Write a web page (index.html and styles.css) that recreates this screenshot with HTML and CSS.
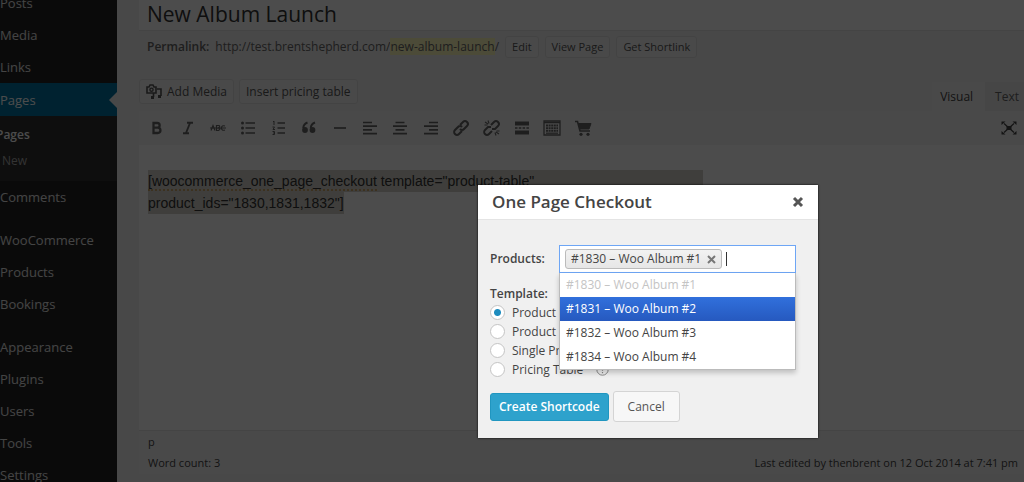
FILE: index.html
```html
<!DOCTYPE html>
<html lang="en">
<head>
<meta charset="utf-8">
<title>New Album Launch</title>
<link rel="stylesheet" href="styles.css">
</head>
<body>
<div class="app">
  <nav class="menu" aria-label="Admin menu">
    <a class="item" href="#">Posts</a>
    <a class="item" href="#">Media</a>
    <a class="item" href="#">Links</a>
    <a class="item current" href="#">Pages</a>
    <div class="submenu">
      <a class="subitem selected" href="#">Pages</a>
      <a class="subitem" href="#">New</a>
    </div>
    <a class="item" href="#">Comments</a>
    <a class="item group" href="#">WooCommerce</a>
    <a class="item" href="#">Products</a>
    <a class="item" href="#">Bookings</a>
    <a class="item group" href="#">Appearance</a>
    <a class="item" href="#">Plugins</a>
    <a class="item" href="#">Users</a>
    <a class="item" href="#">Tools</a>
    <a class="item" href="#">Settings</a>
  </nav>

  <main class="main">
    <input class="title" type="text" aria-label="Title" value="New Album Launch">
    <div class="permalink">
      <strong>Permalink:</strong>
      <span class="url">http://test.brentshepherd.com/<mark>new-album-launch</mark>/</span>
      <button class="small">Edit</button>
      <button class="small">View Page</button>
      <button class="small">Get Shortlink</button>
    </div>

    <div class="tools">
      <button class="media">
        <svg width="16" height="16" viewBox="0 0 16 16" fill="none" stroke="currentColor"><path d="M1 3h2l1-2h3l1 2h2v6H1z" stroke-width="1.6"/><circle cx="5.5" cy="5.7" r="1.6" stroke-width="1.4"/><path d="M11 5h4v7M7.500 9v4" stroke-width="1.600"/><path d="M5 12h3v3H5zM12 11h3v3h-3z" fill="currentColor" stroke="none"/></svg>
        Add Media
      </button>
      <button class="media">Insert pricing table</button>
      <div class="tabs">
        <button class="tab active">Visual</button>
        <button class="tab">Text</button>
      </div>
    </div>

    <section class="editor">
      <div class="toolbar">
        <div class="icons">
          <button aria-label="Bold"><svg viewBox="0 0 18 18"><path d="M5.500 4h3.800a2.300 2.300 0 0 1 0 4.700H5.500zM5.500 8.700h4.300a2.600 2.600 0 0 1 0 5.300H5.500z" stroke-width="2.300"/></svg></button>
          <button aria-label="Italic"><svg viewBox="0 0 18 18"><path d="M8 3.700h6M4 14.300h6M11 4L7 14" stroke-width="1.900"/></svg></button>
          <button aria-label="Strikethrough"><svg viewBox="0 0 18 18"><path d="M1 9h16" stroke-width="1"/><path d="M2 11.500L4 6.500l2 5M7.500 6.500v5h2q3-2.500 0-2.500q2.500-2.500 0-2.500zM16 7q-3.500-1-3.500 2t3.500 2" stroke-width="1.200"/></svg></button>
          <button aria-label="Bulleted list"><svg viewBox="0 0 18 18"><path d="M6.500 4H16M6.500 9H16M6.500 14H16" stroke-width="1.400"/><g fill="currentColor" stroke="none"><circle cx="3.500" cy="4" r="1.500"/><circle cx="3.500" cy="9" r="1.500"/><circle cx="3.500" cy="14" r="1.500"/></g></svg></button>
          <button aria-label="Numbered list"><svg viewBox="0 0 18 18"><path d="M7.500 4H15M7.500 9H15M7.500 14H15" stroke-width="1.400"/><path d="M3 3l1-1v4M2.500 8h2L3 10.500h2M2.500 12.500h2v3h-2M3 14h1.500" stroke-width="1"/></svg></button>
          <button aria-label="Blockquote"><svg viewBox="0 0 18 18"><path d="M7.500 3.500Q3.500 5 3.300 9" stroke-width="2"/><path d="M15 3.500Q11 5 10.800 9" stroke-width="2"/><g fill="currentColor" stroke="none"><circle cx="5" cy="11" r="2.900"/><circle cx="12.500" cy="11" r="2.900"/></g></svg></button>
          <button aria-label="Horizontal line"><svg viewBox="0 0 18 18"><path d="M3 9h12" stroke-width="1.700"/></svg></button>
          <button aria-label="Align left"><svg viewBox="0 0 18 18"><path d="M2 3.500h9M2 7.200h14M2 10.900h9M2 14.600h14" stroke-width="1.700"/></svg></button>
          <button aria-label="Align center"><svg viewBox="0 0 18 18"><path d="M4.500 3.500h9M2 7.200h14M4.500 10.900h9M2 14.600h14" stroke-width="1.700"/></svg></button>
          <button aria-label="Align right"><svg viewBox="0 0 18 18"><path d="M7 3.500h9M2 7.200h14M7 10.900h9M2 14.600h14" stroke-width="1.700"/></svg></button>
          <button aria-label="Insert link"><svg viewBox="0 0 18 18"><path d="M8 6l3-3a2.600 2.600 0 0 1 4 4l-3 3a2.600 2.600 0 0 1-4 0M10 12l-3 3a2.600 2.600 0 0 1-4-4l3-3a2.600 2.600 0 0 1 4 0" stroke-width="2.100"/></svg></button>
          <button aria-label="Remove link"><svg viewBox="0 0 18 18"><path d="M8 6l3-3a2.600 2.600 0 0 1 4 4l-3 3H9M9 12l-3 3a2.600 2.600 0 0 1-4-4l3-3h3" stroke-width="2"/><path d="M2 3l3 2M5 1.500l1 3M1.500 6h3M16 15l-3-2M13 16.500l-1-3M16.500 12h-3" stroke-width="1.100"/></svg></button>
          <button aria-label="Read more"><svg viewBox="0 0 18 18"><path d="M2 4.500h14M2 13.500h14" stroke-width="4"/><path d="M2 9h14" stroke-width="1.300" stroke-dasharray="2.500 1.300"/></svg></button>
          <button aria-label="Toolbar toggle"><svg viewBox="0 0 18 18"><path d="M1 2h16v14H1z" stroke-width="1.300"/><path d="M1 3.500h16" stroke-width="1.500"/><path d="M3 6.500h12M3 9.200h12M3 11.900h12" stroke-width="1.900" stroke-dasharray="2 .6"/><path d="M3 14.200h12" stroke-width="1.200"/></svg></button>
          <button aria-label="One page checkout"><svg viewBox="0 0 18 18"><path d="M1 2.500h2.500L6 12h10" stroke-width="1.600"/><path d="M4.500 4.500H17L15 10H6z" fill="currentColor" stroke-width="1"/><g fill="currentColor" stroke="none"><circle cx="7" cy="15.300" r="1.600"/><circle cx="14" cy="15.300" r="1.600"/></g></svg></button>
        </div>
        <button class="full" aria-label="Distraction free writing"><svg viewBox="0 0 18 18"><path d="M4 4.500l10 9M14 4.500l-10 9" stroke-width="1.200"/><path d="M6.500 7h5v4h-5zM1.500 2.500h4l-4 3.500zM16.500 2.500h-4l4 3.500zM1.500 15.500h4L1.500 12zM16.500 15.500h-4l4-3.500z" fill="currentColor" stroke="none"/></svg></button>
      </div>
      <div class="content">
        <div class="line full-line"><span class="misspelt">[woocommerce_one_page_checkout</span> template="product-table"</div>
        <div class="line">product_ids="1830,1831,1832"]</div>
      </div>
      <footer class="status">
        <div class="path">p</div>
        <div class="info"><span>Word count: 3</span><span>Last edited by thenbrent on 12 Oct 2014 at 7:41 pm</span></div>
      </footer>
    </section>
  </main>
</div>

<div class="overlay"></div>

<div class="dialog" role="dialog" aria-labelledby="dialog-title">
  <header class="dialog-head">
    <h2 id="dialog-title">One Page Checkout</h2>
    <button class="close" aria-label="Close"><svg width="12" height="12" viewBox="0 0 12 12"><path d="M2 2l8 8M10 2l-8 8" stroke="currentColor" stroke-width="3"/></svg></button>
  </header>
  <form class="dialog-body">
    <div class="field">
      <label for="products">Products:</label>
      <div class="select">
        <div class="box">
          <span class="token">#1830 – Woo Album #1
            <button type="button" aria-label="Remove"><svg width="9" height="9" viewBox="0 0 9 9"><path d="M1 1l7 7M8 1L1 8" stroke="currentColor" stroke-width="2"/></svg></button>
          </span>
          <span class="caret"></span>
          <input id="products" type="text">
        </div>
        <ul class="options" role="listbox" aria-label="Products">
          <li class="disabled" role="option" aria-disabled="true">#1830 – Woo Album #1</li>
          <li class="highlight" role="option" aria-selected="true">#1831 – Woo Album #2</li>
          <li role="option">#1832 – Woo Album #3</li>
          <li role="option">#1834 – Woo Album #4</li>
        </ul>
      </div>
    </div>
    <fieldset class="templates">
      <legend>Template:</legend>
      <label><input type="radio" name="template" checked>Product</label>
      <label><input type="radio" name="template">Product</label>
      <label><input type="radio" name="template">Single Pr</label>
      <label><input type="radio" name="template">Pricing Table
        <svg class="help" width="13" height="13" viewBox="0 0 13 13" fill="none" stroke="currentColor"><circle cx="6.500" cy="6.500" r="5.700"/><path d="M4.700 5.200q0-1.700 1.800-1.700t1.800 1.500q0 1-1.800 2v.8M6.500 9v1.200" stroke-width="1.200"/></svg>
      </label>
    </fieldset>
    <div class="actions">
      <button type="button" class="primary">Create Shortcode</button>
      <button type="button" class="cancel">Cancel</button>
    </div>
  </form>
</div>
</body>
</html>
```
FILE: styles.css
```css
* { box-sizing: border-box; }

body {
  margin: 0;
  height: 100vh;
  overflow: hidden;
  position: relative;
  background: #f1f1f1;
  color: #444;
  font: 12px/16px "Open Sans", sans-serif;
}

button, input { font: inherit; color: inherit; }
button { display: inline-flex; align-items: center; justify-content: center; padding: 0; border: 0; background: none; white-space: nowrap; }

.app { display: flex; height: 100%; }

/* Admin menu */
.menu {
  flex: none;
  width: 117px;
  height: 100%;
  margin-top: -13px;
  background: #222;
  box-shadow: 0 13px #222;
}
.item, .subitem { display: block; color: #e4e4e4; text-decoration: none; }
.item { height: 32px; font-size: 13px; line-height: 32px; }
.item.group { margin-top: 11px; }
.item.current { position: relative; height: 33px; line-height: 34px; background: #0074a2; color: #fff; }
.item.current::after {
  content: "";
  position: absolute;
  right: 0;
  top: 9px;
  border: 8px solid transparent;
  border-left-width: 0;
  border-right-color: #f1f1f1;
}
.submenu { padding: 6px 0 7px; background: #303030; }
.subitem { height: 26px; padding-left: 2px; font-size: 12px; line-height: 26px; color: #aaa; }
.subitem.selected { padding: 0; text-indent: -4px; font-weight: 600; color: #fff; }

/* Edit screen */
.main { flex: 1; min-width: 0; display: flex; flex-direction: column; padding: 0 0 8px 22px; }
.title {
  width: 100%;
  height: 31px;
  padding: 0 8px 2px;
  border: 0;
  border-bottom: 1px solid #e4e4e4;
  background: #fff;
  color: #333;
  font-size: 21px;
}
.permalink { display: flex; align-items: center; gap: 6px; height: 32px; padding-left: 8px; font-size: 12px; color: #666; }
.permalink strong { font-weight: 600; }
.permalink mark { background: #fffbbc; color: inherit; }
.small, .media { border: 1px solid #e2e2e2; border-radius: 3px; background: #f5f5f5; color: #555; }
.small { height: 22px; padding: 0 6px; font-size: 11px; }

.tools { display: flex; gap: 5px; align-items: flex-start; height: 48px; padding-top: 16px; }
.media { height: 25px; padding: 0 6px; gap: 5px; font-size: 12px; }
.tabs { display: flex; align-self: flex-end; margin-left: auto; }
.tab { height: 29px; padding: 0 5px 0 10px; font-size: 12px; color: #666; background: #ebebeb; }
.tab.active { padding: 0 12px 0 8px; background: #f5f5f5; color: #444; }

.editor { flex: 1; min-height: 0; display: flex; flex-direction: column; background: #fff; }
.toolbar { display: flex; justify-content: space-between; height: 34px; padding-left: 3px; background: #f5f5f5; color: #666; }
.toolbar svg { width: 18px; height: 18px; fill: none; stroke: currentColor; }
.icons { display: grid; grid-template-columns: repeat(15, 1fr); width: 456px; }
.full { width: 30px; color: #444; }
.content { flex: 1; padding: 25px 9px; font: 14px/22px "Liberation Sans", sans-serif; color: #333; }
.line { width: fit-content; background: #d2d1c9; }
.full-line { width: 100%; max-width: 555px; }
.misspelt { border-bottom: 2px dotted #c9a56a; }
.status { padding: 0 6px 0 9px; border-top: 1px solid #e4e4e4; background: #f5f5f5; font-size: 11px; }
.path { line-height: 21px; }
.info { display: flex; justify-content: space-between; line-height: 22px; }

.overlay { position: absolute; inset: 0; background: rgba(0, 0, 0, .7); }

/* Shortcode dialog */
.dialog {
  position: absolute;
  top: 185px;
  left: 478px;
  width: 340px;
  background: #f0f0f0;
  color: #444;
  box-shadow: 0 0 2px #000;
}
.dialog-head { display: flex; align-items: center; justify-content: space-between; height: 35px; padding: 0 14px; background: #fff; border-bottom: 1px solid #e4e4e4; }
.dialog-head h2 { margin: 0; font-size: 17px; line-height: 24px; font-weight: 600; }
.close { color: #555; }
.dialog-body { padding: 25px 12px 16px; }
.field { display: flex; align-items: center; gap: 12px; padding-right: 10px; }
.field > label { flex: none; width: 57px; white-space: nowrap; }
.field > label, .templates legend { font-weight: 600; }
.select { position: relative; flex: 1; min-width: 0; }
.box { display: flex; align-items: center; height: 28px; padding: 0 5px; border: 1px solid #6ea6f5; background: #fff; }
.token { display: flex; align-items: center; gap: 6px; height: 20px; padding: 0 5px; border: 1px solid #bbb; border-radius: 3px; background: linear-gradient(#f2f2f2, #e6e6e6); white-space: nowrap; }
.token button { color: #777; }
.caret { width: 1px; height: 14px; margin-left: 4px; background: #333; }
.box input { flex: 1; min-width: 0; height: 20px; padding: 0; border: 0; background: none; outline: 0; }
.options {
  position: absolute;
  top: 100%;
  left: 0;
  right: 0;
  margin: 0;
  padding: 0;
  list-style: none;
  border: 1px solid #bbb;
  border-top: 0;
  background: #fff;
  box-shadow: 0 3px 5px rgba(0, 0, 0, .2);
}
.options li { height: 24px; padding-left: 6px; line-height: 24px; }
.options .disabled { color: #c4c4c4; }
.options .highlight { background: linear-gradient(#3170dc, #2659bf); color: #fff; }

.templates { margin: 0; padding: 13px 0 0; border: 0; }
.templates legend { float: left; width: 100%; padding: 0; margin-bottom: 1px; }
.templates label { display: flex; align-items: center; clear: both; height: 19px; gap: 7px; }
.templates input {
  appearance: none;
  width: 15px;
  height: 15px;
  margin: 0;
  border: 1px solid #c4c4c4;
  border-radius: 50%;
  background: #fff;
}
.templates input:checked { background: radial-gradient(circle, #1e8cbe 3px, #fff 4px); }
.help { margin-left: 6px; color: #888; }

.actions { display: flex; align-items: center; gap: 4px; padding-top: 12px; }
.primary { height: 28px; padding: 0 8px; border: 1px solid #2096c0; border-radius: 3px; background: #2ea2cc; color: #fff; font-weight: 600; }
.cancel { height: 31px; padding: 0 14px; border: 1px solid #d4d4d4; border-radius: 3px; background: #f7f7f7; color: #555; }
```
